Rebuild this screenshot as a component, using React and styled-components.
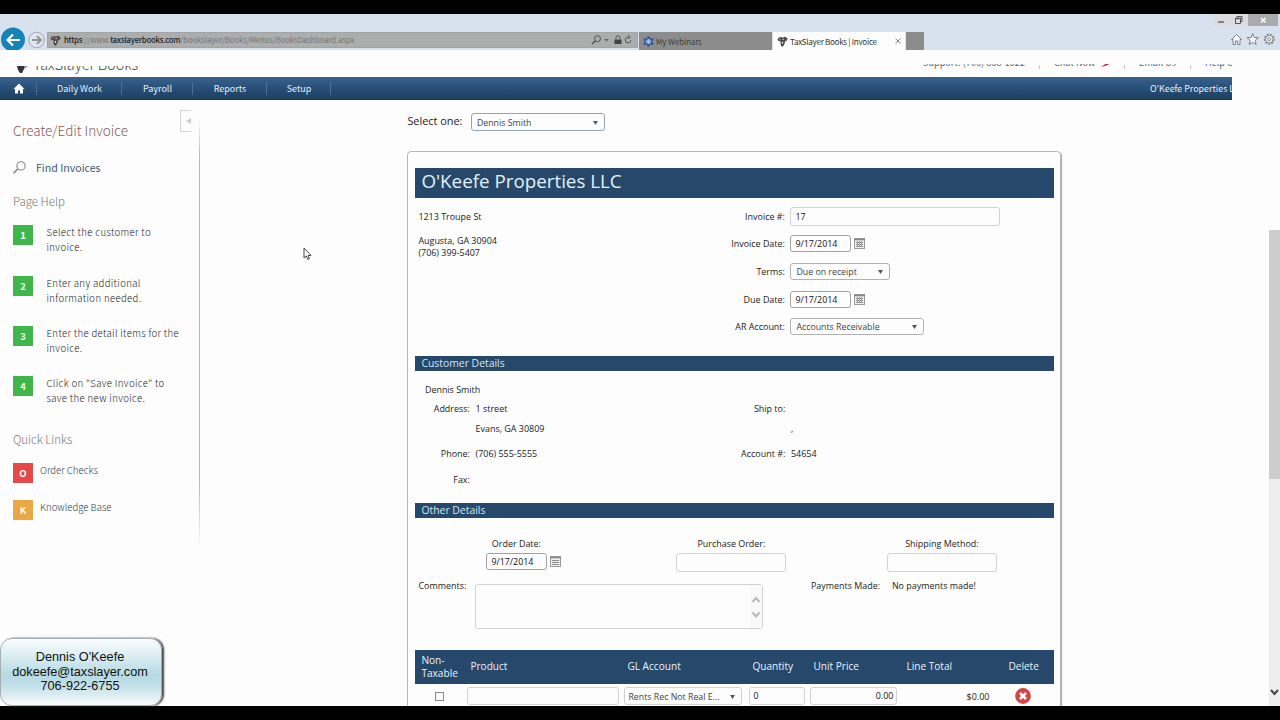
import React from "react";
import styled, { createGlobalStyle } from "styled-components";

const navy = "#26486b";
const sans = `"Open Sans", "Noto Sans", sans-serif`;
const source = `"Noto Sans CJK SC", "Open Sans", sans-serif`;

const GlobalStyle = createGlobalStyle`
  * { box-sizing: border-box; }
  body {
    margin: 0;
    background: #000;
    overflow: hidden;
  }
`;

const Screen = styled.div`
  position: relative;
  width: 1280px;
  height: 720px;
  padding: 14px 0;
  background: #000;
  font-family: ${sans};
  font-size: 8.95px;
  color: #222;
  white-space: nowrap;
  overflow: hidden;
`;

/* ---------- browser ---------- */

const Browser = styled.header`
  display: flex;
  align-items: flex-end;
  height: 36px;
  background: #d7e2ee;
  font-family: ${source};
`;

const BrowserArrows = styled.svg`
  flex: none;
  width: 47px;
  height: 24px;
`;

const AddressBar = styled.div`
  display: flex;
  align-items: center;
  width: 591px;
  height: 16px;
  margin-bottom: 2px;
  padding: 0 4px 0 2px;
  background: #acadad;
  border: 1px solid #a2a5a8;
`;

const Url = styled.span`
  flex-grow: 1;
  margin-left: 3px;
  font-size: 7.7px;
  line-height: 14px;
  letter-spacing: -0.07px;
  color: #777;

  b {
    font-weight: 500;
    color: #222;
    letter-spacing: -0.2px;
  }
`;

const Tab = styled.div`
  display: flex;
  align-items: center;
  width: ${p => p.$width}px;
  height: 18px;
  margin-left: 1px;
  padding: 0 4px;
  gap: 4px;
  background: ${p => (p.$active ? "#fdfdfd" : "#8c8c8c")};
  color: ${p => (p.$active ? "#333" : "#3f3f3f")};
  font-size: 8px;
`;

const TabText = styled.span`
  flex-grow: 1;
  margin-left: -2px;
  letter-spacing: ${p => p.$spacing || 0}px;
`;

const BrowserTools = styled.div`
  display: flex;
  flex-direction: column;
  align-items: flex-end;
  justify-content: space-between;
  flex-grow: 1;
  height: 36px;
  padding: 0 2px 4px 0;
`;

const WindowButtons = styled.div`
  display: flex;
  height: 12px;
  background: #dadcde;
`;

const ToolIcons = styled.svg`
  width: 48px;
  height: 14px;
`;

/* ---------- page ---------- */

const Page = styled.div`
  position: relative;
  height: 656px;
  background: #fdfdfd;
  overflow: hidden;
`;

const TopStrip = styled.div`
  display: flex;
  justify-content: space-between;
  width: 1232px;
  height: 27px;
  padding-top: 14px;
  overflow: hidden;
`;

const Brand = styled.div`
  display: flex;
  height: 9px;
  margin-top: 2px;
  margin-left: 16px;
  overflow: hidden;
  font-family: ${source};
  font-size: 14.4px;
  font-weight: 300;
  line-height: 20px;
  color: #444;

  svg { flex: none; margin-right: 4px; }
  span { margin-top: -12px; }
`;

const SupportLinks = styled.div`
  display: flex;
  width: 309px;
  height: 5px;
  overflow: hidden;
  font-family: ${source};
  font-size: 9px;
  line-height: 14px;
  letter-spacing: 0.08px;
  color: #667;

  svg { margin: 0 0 -2px 6px; vertical-align: baseline; }
`;

const SupportLink = styled.span`
  flex: none;
  width: ${p => p.$width}px;
  margin-top: -8px;
`;

const SupportDivider = styled.i`
  flex: none;
  width: 1px;
  height: 4px;
  margin: 1px 14px 0 0;
  background: #c8c8c8;
`;

const NavBar = styled.nav`
  display: flex;
  align-items: center;
  width: 1232px;
  height: 23px;
  background: linear-gradient(#3b628b, #29507a 45%, #1d4063 94%, #14304d);
  color: #e6eef6;
  font-family: ${source};
  font-size: 9px;
  overflow: hidden;
`;

const NavItem = styled.a`
  display: flex;
  justify-content: center;
  align-items: center;
  width: ${p => p.$width}px;
  height: 13px;
  padding: 0 0 1px 1px;
  border-right: 1px solid #4a6d92;

  svg { margin-top: 1px; }
`;

const Company = styled.span`
  margin: -1px 0 0 auto;
  width: 82px;
  overflow: hidden;
  font-size: 8.9px;
`;

const Body = styled.div`
  display: flex;
  height: 606px;
`;

const Sidebar = styled.aside`
  width: 200px;
  height: 452px;
  padding: 20px 0 0 13px;
  background: linear-gradient(transparent, #b9b9b9 8%, #b9b9b9 85%, transparent) 199px 20px / 1px 430px no-repeat;
  font-family: ${source};
  font-weight: 300;
`;

const SidebarTitle = styled.h1`
  margin: 0;
  height: 22px;
  font-size: 13.5px;
  font-weight: 300;
  line-height: 20px;
  color: #8a5a5a;
`;

const FindLink = styled.a`
  display: flex;
  align-items: center;
  gap: 10px;
  height: 20px;
  margin-top: 15px;
  font-size: 10.6px;
  font-weight: 400;
  color: #3c5878;
`;

const SidebarHeading = styled.h2`
  margin: 0;
  height: 20px;
  margin-top: ${p => p.$top}px;
  font-size: 11.5px;
  font-weight: 300;
  line-height: 20px;
  color: #777;
`;

const Steps = styled.div`
  height: 200px;
  margin-top: 13px;
`;

const Step = styled.div`
  display: flex;
  height: 50.2px;
  font-size: 9.6px;
  line-height: 15px;
  letter-spacing: 0.35px;
  color: #222;

  p { margin: 1.4px 0 0 13.5px; }
`;

const Badge = styled.span`
  flex: none;
  width: 20px;
  height: 20px;
  margin-top: ${p => p.$top || 0}px;
  background: ${p => p.$color || "#3fb54a"};
  color: #f4fff4;
  font-size: 9.5px;
  font-weight: 700;
  line-height: 20px;
  text-align: center;
  letter-spacing: 0;
`;

const QuickLinks = styled.div`
  margin-top: 14px;
`;

const QuickLink = styled.a`
  display: flex;
  height: 36.6px;
  gap: 7px;
  font-size: 9.6px;
  line-height: 14px;
  color: #2c3e52;
`;

const Collapse = styled.div`
  position: absolute;
  left: 180px;
  top: 60px;
  width: 11px;
  height: 22px;
  border: 1px solid #d4d4d4;
  border-right: 0;

  svg { display: block; margin: 7px 0 0 5px; }
`;

const Main = styled.main`
  width: 654px;
  margin-left: 207.4px;
`;

const SelectRow = styled.div`
  display: flex;
  align-items: center;
  height: 18px;
  margin-top: 13px;
  font-size: 10.9px;

  > span { width: 63.5px; margin-top: -3px; }
`;

const Select = styled.div`
  display: flex;
  align-items: center;
  justify-content: space-between;
  width: ${p => p.$width}px;
  height: ${p => p.$height || 17}px;
  padding: 1.5px 6px 0 ${p => p.$pad || 5}px;
  border: 1px solid ${p => p.$border || "#b2b2b2"};
  border-radius: 3px;
  font-family: ${sans};
  font-size: 8.8px;
  color: #444;
`;

const Input = styled.div`
  width: ${p => p.$width}px;
  height: ${p => p.$height || 18}px;
  padding: 0 ${p => p.$pad || 4}px;
  border: 1px solid #d2d2d2;
  border-radius: 3px;
  line-height: ${p => (p.$height || 18) - 2}px;
  text-align: ${p => p.$align || "left"};
  font-size: 8.9px;
  color: #111;
`;

const Invoice = styled.section`
  width: 654px;
  height: 590px;
  margin-top: 19.5px;
  padding: 16px 7px 0;
  border: 1px solid #b8b8b8;
  border-radius: 4px;
  box-shadow: 1px 1px 1px #aaa;
`;

const TitleBar = styled.h2`
  margin: 0;
  width: 639px;
  height: 30px;
  padding-left: 6px;
  background: ${navy};
  color: #e3f1fa;
  font-size: 18.8px;
  font-weight: 400;
  line-height: 27px;
`;

const SectionBar = styled.h3`
  margin: 0;
  width: 639px;
  height: 15px;
  padding-left: 6px;
  background: ${navy};
  color: #d5e6f2;
  font-size: 10.4px;
  font-weight: 400;
  line-height: 15px;
`;

const Header = styled.div`
  display: flex;
  height: 158px;
  padding: 5px 0 0 3px;
`;

const CompanyAddress = styled.address`
  width: 282px;
  padding-top: 8px;
  font-style: normal;
  line-height: 12px;
`;

const Field = styled.div`
  display: flex;
  align-items: center;
  height: 27.6px;
`;

const FieldLabel = styled.span`
  width: 84.5px;
  margin-right: 5.5px;
  text-align: right;
`;

const DateInput = styled(Input)`
  width: 61px;
  height: 17px;
  line-height: 16px;
  margin-right: 3px;
  border-color: #a2a2a2;
`;

const Customer = styled.div`
  height: 132px;
  padding-top: 12.5px;
`;

const CustomerName = styled.div`
  height: 18.5px;
  padding-left: 9.5px;
  line-height: 14px;
`;

const CustomerRow = styled.div`
  display: grid;
  grid-template-columns: 54.5px 249px 55px 1fr;
  column-gap: 5.7px;
  height: ${p => p.$height}px;
  line-height: 14px;
`;

const CustomerLabel = styled.span`
  text-align: right;
`;

const Order = styled.div`
  height: 132px;
  padding-top: 19px;
`;

const OrderFields = styled.div`
  display: grid;
  grid-template-columns: 202px 228px 193px;
  height: 47px;
`;

const OrderField = styled.div`
  display: flex;
  flex-direction: column;
  align-items: center;
  line-height: 14px;

  > div { margin-top: 2.5px; }
`;

const DateGroup = styled.div`
  display: flex;
  align-items: center;
  height: 17px;
  padding-left: 15px;
`;

const CommentsRow = styled.div`
  display: flex;
  line-height: 14px;
  padding-left: 3px;
`;

const CommentsCell = styled.span`
  width: ${p => p.$width}px;
  margin-top: -5px;
`;

const TextArea = styled.div`
  display: flex;
  justify-content: flex-end;
  align-items: center;
  width: 288px;
  height: 45px;
  margin-right: 47.5px;
  border: 1px solid #d2d2d2;
  border-radius: 3px;

  svg { background: #f9f9f9; }
`;

const cols = "52px 157px 125px 61px 93px 102px 49px";

const TableHead = styled.div`
  display: grid;
  grid-template-columns: ${cols};
  align-items: center;
  width: 639px;
  height: 34px;
  padding-left: 3px;
  background: ${navy};
  color: #e8f2fa;
  font-size: 10.1px;
  line-height: 13px;

  span:first-child { padding-left: 3px; }
`;

const TableRow = styled.div`
  display: grid;
  grid-template-columns: ${cols};
  align-items: center;
  height: 25px;

  > svg { margin-left: 10px; }
`;

const CheckBox = styled.span`
  width: 9px;
  height: 9px;
  margin-left: 20px;
  border: 1px solid #888;
`;

const Total = styled.span`
  padding-right: 16px;
  text-align: right;
`;

const Scrollbar = styled.div`
  position: absolute;
  right: 0;
  top: 180px;
  width: 11px;
  height: 476px;
  background: #eee;
`;

const Thumb = styled.div`
  height: 249px;
  margin-bottom: 207px;
  background: #cdcdcd;
`;

const Pointer = styled.svg`
  position: absolute;
  left: 303px;
  top: 247px;
`;

const ContactCard = styled.div`
  position: absolute;
  left: 0;
  top: 638px;
  width: 162px;
  height: 68px;
  padding: 11px 2px 0 0;
  border: 1px solid #a5afb3;
  border-radius: 12px;
  background: linear-gradient(#fafdfe, #d5ebf0 30%, #b5dae3 55%, #c3e1e8 72%, #f8fcfd);
  box-shadow: 2px 0 2px #444;
  color: #111;
  font-family: "Liberation Sans", Arial, sans-serif;
  font-size: 12.7px;
  line-height: 14.6px;
  text-align: center;
`;

const Arrow = ({ color = "#555" }) => (
  <svg width="5" height="4" viewBox="0 0 5 4">
    <path d="M0 0h5L2.5 4z" fill={color} />
  </svg>
);

const Calendar = ({ rows }) => (
  <svg width="11" height="11" viewBox="0 0 11 11">
    <rect x=".5" y=".5" width="10" height="10" fill="#eee" stroke="#9a9a9a" />
    <path d="M0 1.5h11" stroke="#888" strokeWidth="1.6" />
    <path d="M2 4.5h7M2 6.5h7M2 8.5h7" stroke="#8d8d8d" />
    {!rows && <path d="M3.5 3v6M5.5 3v6M7.5 3v6" stroke="#a2a2a2" />}
  </svg>
);

const SiteIcon = () => (
  <svg width="11" height="11" viewBox="0 0 11 11">
    <path d="M.5 3.5L2 1.5 4 1l1.5.8L8 .8l2.5 1.4-.2 2L8 5.5 7.5 8 6 10.5H4.5L3.5 8l.3-2.5L1.5 5z" fill="#4b4545" />
    <path d="M1.800 3l2-.6-.6 1.4zM5 3.2l2.300-.8-1 1.800zM4.700 6l1.600-.3-.3 2-1 .3z" fill="#ddd" />
    <path d="M7.500 4l2-1-.5 1.500z" fill="#a56a6a" />
  </svg>
);

const Magnifier = () => (
  <svg width="13" height="13" viewBox="0 0 12 12" fill="none" stroke="#858585">
    <circle cx="7.4" cy="4.5" r="3.8" />
    <path d="M4.6 7.2L.6 11.2" strokeWidth="1.4" />
  </svg>
);

const steps = [
  ["Select the customer to", "invoice."],
  ["Enter any additional", "information needed."],
  ["Enter the detail items for the", "invoice."],
  ['Click on "Save Invoice" to', "save the new invoice."]
];

const customerRows = [
  { height: 20.8, label: "Address:", value: "1 street", label2: "Ship to:" },
  { height: 25.2, value: "Evans, GA 30809", value2: "," },
  { height: 25.5, label: "Phone:", value: "(706) 555-5555", label2: "Account #:", value2: "54654" },
  { height: 20, label: "Fax:" }
];

const BrowserBar = () => (
  <Browser>
    <BrowserArrows viewBox="0 0 47 24">
      <circle cx="13" cy="13.5" r="12" fill="#1683b7" />
      <path d="M20 14H8M13 8.5L7.5 14l5.5 5.5" fill="none" stroke="#fff" strokeWidth="2.2" />
      <circle cx="36.5" cy="14" r="7.7" fill="#dfe7ee" stroke="#9faab4" />
      <path d="M32 14h8M37 10.3l3.8 3.7-3.8 3.7" fill="none" stroke="#8f969c" strokeWidth="2.2" />
    </BrowserArrows>
    <AddressBar>
      <SiteIcon />
      <Url><b>https</b>://www.<b>taxslayerbooks.com</b>/bookslayer/Books/Menus/BooksDashboard.aspx</Url>
      <svg width="42" height="12" viewBox="0 0 42 12" fill="none" stroke="#555">
        <circle cx="6.5" cy="4.7" r="3" />
        <path d="M4.3 6.800L1.200 10" strokeWidth="1.5" />
        <path d="M13 5h5l-2.500 2.500z" fill="#666" stroke="none" />
        <path d="M23.500 5.500h7V10h-7z" fill="#444" stroke="none" />
        <path d="M25 5.500V3.700a2 2 0 0 1 4 0v1.800" />
        <path d="M40 6.200a2.900 2.900 0 1 1-2.600-3M36.800 1l2.500 2.200-2.600 1.600" />
      </svg>
    </AddressBar>
    <Tab $width={133}>
      <svg width="11" height="11" viewBox="0 0 11 11" fill="#2f559f">
        <circle cx="5.5" cy="1.9" r="1.6" /><circle cx="5.5" cy="9.1" r="1.6" />
        <circle cx="2.2" cy="3.7" r="1.6" /><circle cx="8.8" cy="3.7" r="1.6" />
        <circle cx="2.2" cy="7.4" r="1.6" /><circle cx="8.8" cy="7.4" r="1.6" />
        <path d="M5.5 3v5M3.3 4.3l4.400 2.500M7.700 4.300L3.300 6.800" stroke="#a9c4ee" />
      </svg>
      <TabText $spacing={-0.14}>My Webinars</TabText>
    </Tab>
    <Tab $active $width={132}>
      <SiteIcon />
      <TabText $spacing={-0.26}>TaxSlayer Books | Invoice</TabText>
      <svg width="6" height="6" viewBox="0 0 6 6" stroke="#888"><path d="M.5.5l5 5M5.500.5l-5 5" /></svg>
    </Tab>
    <Tab $width={18} />
    <BrowserTools>
      <WindowButtons>
        <svg width="65" height="12" viewBox="0 0 65 12" fill="none">
          <path d="M35 0h30v12H35z" fill="#aaabac" />
          <path d="M5 8h6" stroke="#666" strokeWidth="1.5" />
          <path d="M22.500 4.500h5v5h-5zM24 4V2.500h5v5h-1.300" stroke="#555" />
          <path d="M22 4.500h6" stroke="#555" strokeWidth="1.4" />
          <path d="M48 4l4.500 4.500M52.500 4L48 8.500" stroke="#fff" strokeWidth="1.5" />
        </svg>
      </WindowButtons>
      <ToolIcons viewBox="0 0 48 14" fill="#f6f8fa" stroke="#7c8288">
        <path d="M1.500 7.500l5-5 5 5h-1.500v5H7.700V9H5.300v3.500H3v-5z" />
        <path d="M22.700 1.500l1.500 3.900 4.200.3-3.200 2.700 1 4.100-3.500-2.200-3.500 2.200 1-4.100-3.200-2.700 4.200-.3z" />
        <circle cx="39.3" cy="7.2" r="4.8" strokeDasharray="2 1.2" strokeWidth="1.4" />
        <circle cx="39.3" cy="7.2" r="3.8" />
        <circle cx="39.3" cy="7.2" r="1.5" />
      </ToolIcons>
    </BrowserTools>
  </Browser>
);

const HelpSidebar = () => (
  <Sidebar>
    <SidebarTitle>Create/Edit Invoice</SidebarTitle>
    <FindLink><Magnifier />Find Invoices</FindLink>
    <SidebarHeading $top={14}>Page Help</SidebarHeading>
    <Steps>
      {steps.map(([first, second], i) => (
        <Step key={i}>
          <Badge $top={1.4}>{i + 1}</Badge>
          <p>{first}<br />{second}</p>
        </Step>
      ))}
    </Steps>
    <SidebarHeading $top={5}>Quick Links</SidebarHeading>
    <QuickLinks>
      <QuickLink><Badge $color="#e5484b">O</Badge>Order Checks</QuickLink>
      <QuickLink><Badge $color="#e8a845">K</Badge>Knowledge Base</QuickLink>
    </QuickLinks>
  </Sidebar>
);

const InvoiceForm = () => (
  <Invoice>
    <TitleBar>O'Keefe Properties LLC</TitleBar>
    <Header>
      <CompanyAddress>1213 Troupe St<br /><br />Augusta, GA 30904<br />(706) 399-5407</CompanyAddress>
      <div>
        <Field><FieldLabel>Invoice #:</FieldLabel><Input $width={210} $height={19}>17</Input></Field>
        <Field><FieldLabel>Invoice Date:</FieldLabel><DateInput>9/17/2014</DateInput><Calendar /></Field>
        <Field><FieldLabel>Terms:</FieldLabel><Select $width={100}>Due on receipt<Arrow /></Select></Field>
        <Field><FieldLabel>Due Date:</FieldLabel><DateInput>9/17/2014</DateInput><Calendar /></Field>
        <Field><FieldLabel>AR Account:</FieldLabel><Select $width={134}>Accounts Receivable<Arrow /></Select></Field>
      </div>
    </Header>

    <SectionBar>Customer Details</SectionBar>
    <Customer>
      <CustomerName>Dennis Smith</CustomerName>
      {customerRows.map((row, i) => (
        <CustomerRow key={i} $height={row.height}>
          <CustomerLabel>{row.label}</CustomerLabel>
          <span>{row.value}</span>
          <CustomerLabel>{row.label2}</CustomerLabel>
          <span>{row.value2}</span>
        </CustomerRow>
      ))}
    </Customer>

    <SectionBar>Other Details</SectionBar>
    <Order>
      <OrderFields>
        <OrderField>
          Order Date:
          <DateGroup><DateInput>9/17/2014</DateInput><Calendar rows /></DateGroup>
        </OrderField>
        <OrderField>Purchase Order:<Input $width={110} $height={19} /></OrderField>
        <OrderField>Shipping Method:<Input $width={110} $height={19} /></OrderField>
      </OrderFields>
      <CommentsRow>
        <CommentsCell $width={57}>Comments:</CommentsCell>
        <TextArea>
          <svg width="12" height="43" viewBox="0 0 12 43" fill="none" stroke="#b8b8b8" strokeWidth="2">
            <path d="M2.500 17L6 13l3.500 4M2.500 27.500l3.500 4 3.500-4" />
          </svg>
        </TextArea>
        <CommentsCell $width={81}>Payments Made:</CommentsCell>
        <CommentsCell $width={90}>No payments made!</CommentsCell>
      </CommentsRow>
    </Order>

    <TableHead>
      <span>Non-<br />Taxable</span>
      <span>Product</span>
      <span>GL Account</span>
      <span>Quantity</span>
      <span>Unit Price</span>
      <span>Line Total</span>
      <span>Delete</span>
    </TableHead>
    <TableRow>
      <CheckBox />
      <Input $width={152} />
      <Select $width={118} $height={18} $pad={3} $border="#d2d2d2">Rents Rec Not Real E...<Arrow /></Select>
      <Input $width={56} $pad={3}>0</Input>
      <Input $width={87} $pad={3} $align="right">0.00</Input>
      <Total>$0.00</Total>
      <svg width="16" height="16" viewBox="0 0 16 16">
        <circle cx="8" cy="8" r="7.9" fill="#d14646" />
        <path d="M5 5l6 6M11 5l-6 6" stroke="#fff" strokeWidth="2.5" />
      </svg>
    </TableRow>
  </Invoice>
);

export default function App() {
  return (
    <>
      <GlobalStyle />
      <Screen>
        <BrowserBar />
        <Page>
          <TopStrip>
            <Brand>
              <svg width="13" height="9" viewBox="0 0 13 9">
                <path d="M1 0h7v3L6 7H4L2 4z" fill="#333" />
                <path d="M8 0h4L8 3z" fill="#888" />
              </svg>
              <span>TaxSlayer Books</span>
            </Brand>
            <SupportLinks>
              <SupportLink $width={116}>Support: (706) 868-1022</SupportLink>
              <SupportDivider />
              <SupportLink $width={70}>
                Chat Now
                <svg width="10" height="5" viewBox="0 0 10 5"><path d="M0 4l5-3.500 4 .3-4 2z" fill="#b8354a" /></svg>
              </SupportLink>
              <SupportDivider />
              <SupportLink $width={51}>Email Us</SupportLink>
              <SupportDivider />
              <SupportLink $width={60}>Help Center</SupportLink>
            </SupportLinks>
          </TopStrip>
          <NavBar>
            <NavItem $width={37}>
              <svg width="12" height="11" viewBox="0 0 12 11"><path d="M6 .5l5.500 5.500H10v4.500H7V7.500H5v3H2V6H.5z" fill="#fff" /></svg>
            </NavItem>
            <NavItem $width={85}>Daily Work</NavItem>
            <NavItem $width={71}>Payroll</NavItem>
            <NavItem $width={74}>Reports</NavItem>
            <NavItem $width={64}>Setup</NavItem>
            <Company>O'Keefe Properties LLC</Company>
          </NavBar>
          <Body>
            <HelpSidebar />
            <Main>
              <SelectRow>
                <span>Select one:</span>
                <Select $width={134} $height={18} $border="#8ea5bf">Dennis Smith<Arrow color="#4a6179" /></Select>
              </SelectRow>
              <InvoiceForm />
            </Main>
          </Body>
          <Collapse>
            <svg width="5" height="6" viewBox="0 0 6 7"><path d="M6 0v7L0 3.500z" fill="#ccc" /></svg>
          </Collapse>
          <Scrollbar>
            <Thumb />
            <svg width="11" height="12" viewBox="0 0 11 12" fill="none" stroke="#444" strokeWidth="2"><path d="M2 4l3.500 4L9 4" /></svg>
          </Scrollbar>
        </Page>
        <Pointer width="10" height="14" viewBox="0 0 10 14">
          <path d="M1 1v10l2.300-2 1.500 3.500 1.600-.7L5 8.500h3z" fill="#fff" stroke="#444" />
        </Pointer>
        <ContactCard>Dennis O'Keefe<br />dokeefe@taxslayer.com<br />706-922-6755</ContactCard>
      </Screen>
    </>
  );
}
